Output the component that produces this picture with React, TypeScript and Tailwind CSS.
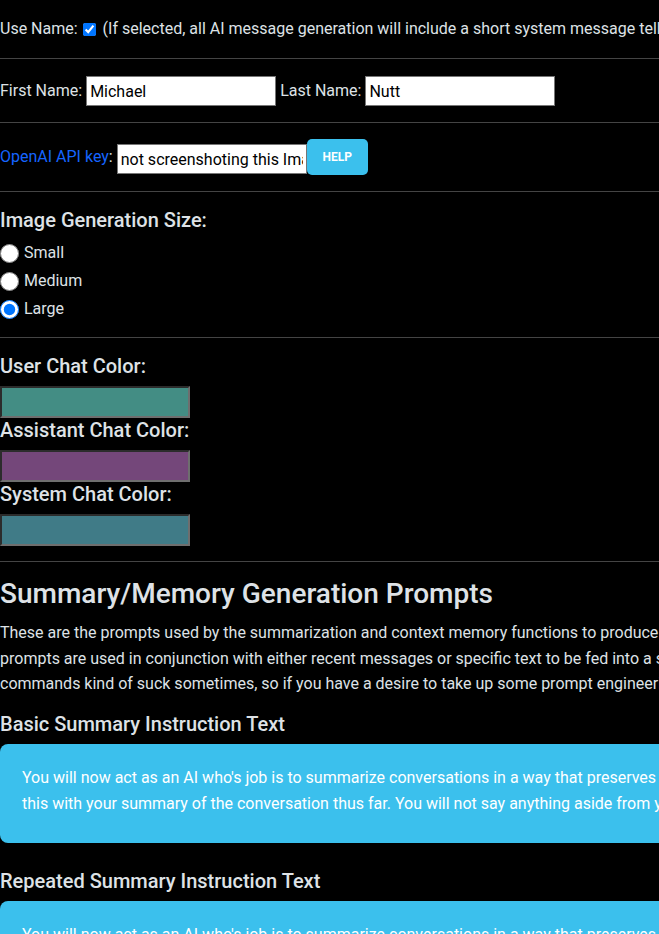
import { useState } from "react";

const font = { fontFamily: "Roboto, 'Noto Sans', sans-serif" };

function ColorSwatch({ color }: { color: string }) {
  return (
    <div
      className="mt-[8px] h-[32px] w-[190px] border-2 border-t-[#2c2c2c] border-l-[#2c2c2c] border-r-[#6e6e6e] border-b-[#6e6e6e]"
      style={{ backgroundColor: color }}
    />
  );
}

export default function App() {
  const [size, setSize] = useState("large");
  const [useName, setUseName] = useState(true);
  const [firstName, setFirstName] = useState("Michael");
  const [lastName, setLastName] = useState("Nutt");
  const [apiKey, setApiKey] = useState("not screenshoting this Imao");

  const sizes = [
    { id: "small", label: "Small" },
    { id: "medium", label: "Medium" },
    { id: "large", label: "Large" },
  ];

  return (
    <div className="min-h-screen w-full overflow-hidden bg-black text-[#dee2e6]" style={font}>
      <div className="w-[1200px] text-[16px]">
        {/* Use name */}
        <div className="flex items-center pt-[19px] pb-[19px] leading-5">
          <span>Use Name:</span>
          <input
            type="checkbox"
            checked={useName}
            onChange={(e) => setUseName(e.target.checked)}
            className="ml-[5px] mr-[7px] h-[13px] w-[13px]"
          />
          <span>
            (If selected, all AI message generation will include a short system message telling the AI your name so that it can address you personally.)
          </span>
        </div>
        <hr className="border-[#444]" />

        {/* Names */}
        <div className="flex items-center pt-[17px] pb-[16px]">
          <label>First Name:</label>
          <input
            value={firstName}
            onChange={(e) => setFirstName(e.target.value)}
            className="ml-[4px] h-[30px] w-[190px] border border-[#767676] bg-white px-[3px] text-black"
          />
          <label className="ml-[4px]">Last Name:</label>
          <input
            value={lastName}
            onChange={(e) => setLastName(e.target.value)}
            className="ml-[4px] h-[30px] w-[190px] border border-[#767676] bg-white px-[3px] text-black"
          />
        </div>
        <hr className="border-[#444]" />

        {/* API key */}
        <div className="flex items-end pt-[16px] pb-[16px]">
          <span className="mb-[6px]">
            <a href="#" className="text-[#1565ff]">OpenAI API key</a>:
          </span>
          <input
            value={apiKey}
            onChange={(e) => setApiKey(e.target.value)}
            className="mb-[1px] ml-[4px] h-[30px] w-[190px] border border-[#767676] bg-white px-[3px] text-black"
          />
          <button className="h-[36px] w-[61px] rounded-[5px] bg-[#3bc0ed] text-[12px] font-bold text-white">
            HELP
          </button>
        </div>
        <hr className="border-[#444]" />

        {/* Image size */}
        <div className="pt-[16px] pb-[14px]">
          <h3 className="text-[20px] font-medium leading-6">Image Generation Size:</h3>
          <div className="mt-[7px]">
            {sizes.map((s) => (
              <label key={s.id} className="flex h-[28px] items-center gap-[5px]">
                <input
                  type="radio"
                  name="size"
                  checked={size === s.id}
                  onChange={() => setSize(s.id)}
                  className="m-0 h-[19px] w-[19px]"
                />
                <span>{s.label}</span>
              </label>
            ))}
          </div>
        </div>
        <hr className="border-[#444]" />

        {/* Chat colors */}
        <div className="pt-[16px] pb-[15px]">
          <h3 className="text-[20px] font-medium leading-6">User Chat Color:</h3>
          <ColorSwatch color="#438d84" />
          <h3 className="text-[20px] font-medium leading-6">Assistant Chat Color:</h3>
          <ColorSwatch color="#74477a" />
          <h3 className="text-[20px] font-medium leading-6">System Chat Color:</h3>
          <ColorSwatch color="#407b87" />
        </div>
        <hr className="border-[#444]" />

        {/* Prompts */}
        <div className="pt-[15px]">
          <h2 className="text-[28px] font-medium leading-[34px]">Summary/Memory Generation Prompts</h2>
          <p className="mt-[9px] leading-[25.6px] whitespace-nowrap">
            These are the prompts used by the summarization and context memory functions to produce summaries of your conversations. These
            <br />
            prompts are used in conjunction with either recent messages or specific text to be fed into a summarization request. The
            <br />
            commands kind of suck sometimes, so if you have a desire to take up some prompt engineering, feel free to improve them here.
          </p>

          <h3 className="mt-[15px] text-[20px] font-medium leading-6">Basic Summary Instruction Text</h3>
          <div className="mt-[8px] rounded-[8px] bg-[#3bc0ed] px-[22px] pt-[21px] pb-[26px] leading-[26px] text-white whitespace-nowrap">
            You will now act as an AI who's job is to summarize conversations in a way that preserves the most important details. You will respond to
            <br />
            this with your summary of the conversation thus far. You will not say anything aside from your summary.
          </div>

          <h3 className="mt-[26px] text-[20px] font-medium leading-6">Repeated Summary Instruction Text</h3>
          <div className="mt-[8px] rounded-[8px] bg-[#3bc0ed] px-[22px] pt-[21px] pb-[26px] leading-[26px] text-white whitespace-nowrap">
            You will now act as an AI who's job is to summarize conversations in a way that preserves the most important details. You will be given
            <br />
            a previous summary along with newer messages. You will not say anything aside from your updated summary.
          </div>
        </div>
      </div>
    </div>
  );
}
